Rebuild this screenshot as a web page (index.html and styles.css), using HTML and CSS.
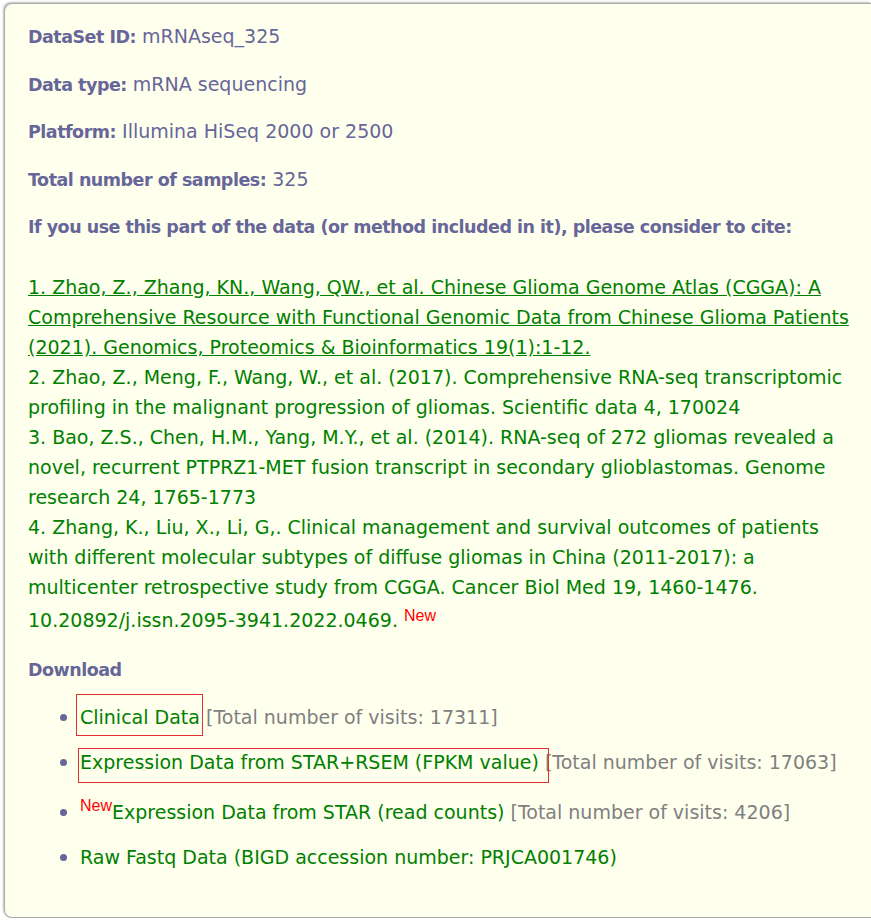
FILE: index.html
```html
<!DOCTYPE html>
<html>
<head>
<meta charset="utf-8">
<link rel="stylesheet" href="styles.css">
</head>
<body>
<div class="card">
  <p class="field"><b>DataSet ID:</b> mRNAseq_325</p>
  <p class="field"><b>Data type:</b> mRNA sequencing</p>
  <p class="field"><b>Platform:</b> Illumina HiSeq 2000 or 2500</p>
  <p class="field"><b>Total number of samples:</b> 325</p>
  <p class="field"><b>If you use this part of the data (or method included in it), please consider to cite:</b></p>
  <div class="cites">
    <a class="cite-link" href="#">1. Zhao, Z., Zhang, KN., Wang, QW., et al. Chinese Glioma Genome Atlas (CGGA): A Comprehensive Resource with Functional Genomic Data from Chinese Glioma Patients (2021). Genomics, Proteomics &amp; Bioinformatics 19(1):1-12.</a><br>
    2. Zhao, Z., Meng, F., Wang, W., et al. (2017). Comprehensive RNA-seq transcriptomic profiling in the malignant progression of gliomas. Scientific data 4, 170024<br>
    3. Bao, Z.S., Chen, H.M., Yang, M.Y., et al. (2014). RNA-seq of 272 gliomas revealed a novel, recurrent PTPRZ1-MET fusion transcript in secondary glioblastomas. Genome research 24, 1765-1773<br>
    4. Zhang, K., Liu, X., Li, G,. Clinical management and survival outcomes of patients with different molecular subtypes of diffuse gliomas in China (2011-2017): a multicenter retrospective study from CGGA. Cancer Biol Med 19, 1460-1476. 10.20892/j.issn.2095-3941.2022.0469. <sup class="new">New</sup>
  </div>
  <p class="field download"><b>Download</b></p>
  <ul class="dl">
    <li><a class="dl-link box1" href="#">Clinical Data</a> <span class="visits">[Total number of visits: 17311]</span></li>
    <li><a class="dl-link box2" href="#">Expression Data from STAR+RSEM (FPKM value)</a> <span class="visits">[Total number of visits: 17063]</span></li>
    <li><sup class="new new-item">New</sup><a class="dl-link" href="#">Expression Data from STAR (read counts)</a> <span class="visits">[Total number of visits: 4206]</span></li>
    <li><a class="dl-link" href="#">Raw Fastq Data (BIGD accession number: PRJCA001746)</a></li>
  </ul>
</div>
</body>
</html>
```

FILE: styles.css
```css
html, body {
  margin: 0;
  padding: 0;
  background: #ffffff;
}
body {
  font-family: "DejaVu Sans", Verdana, sans-serif;
  font-size: 19px;
  color: #666699;
}
.card {
  margin: 3px 0 3px 4px;
  height: 915px;
  box-sizing: border-box;
  background: #ffffee;
  border: 1px solid #aaaaaa;
  border-right: none;
  border-radius: 8px 0 0 8px;
  box-shadow: -1px -1px 2px rgba(0,0,0,0.25);
  padding: 17px 20px 0 23px;
  overflow: hidden;
}
.field {
  margin: 0 0 17.5px 0;
  line-height: 30px;
}
.field b {
  font-weight: bold;
  font-size: 17.5px;
  letter-spacing: -0.5px;
  line-height: 1;
}
.cites {
  margin-top: 31px;
  line-height: 30px;
  color: #008000;
}
.cite-link {
  color: #008000;
  text-decoration: underline;
}
.new {
  color: #ff0000;
  font-family: "Liberation Sans", Arial, sans-serif;
  font-size: 16px;
  line-height: 28px;
  vertical-align: 6px;
}
.new-item {
  vertical-align: 8px;
}
.download {
  margin-top: 19px;
}
.dl {
  margin: 0;
  padding-left: 52px;
  list-style: disc;
}
.dl li {
  line-height: 30px;
  margin-bottom: 15px;
}
.dl li::marker {
  font-size: 22px;
}
.dl-link {
  color: #008000;
  text-decoration: none;
  position: relative;
}
.visits {
  color: #808080;
}
.box1::after,
.box2::after {
  content: "";
  position: absolute;
  border: 1px solid #e03030;
  pointer-events: none;
}
.box1::after {
  left: -4px;
  right: -3px;
  top: -12px;
  bottom: -8px;
}
.box2::after {
  left: -2px;
  right: -10px;
  top: -3px;
  bottom: -10px;
}
```
